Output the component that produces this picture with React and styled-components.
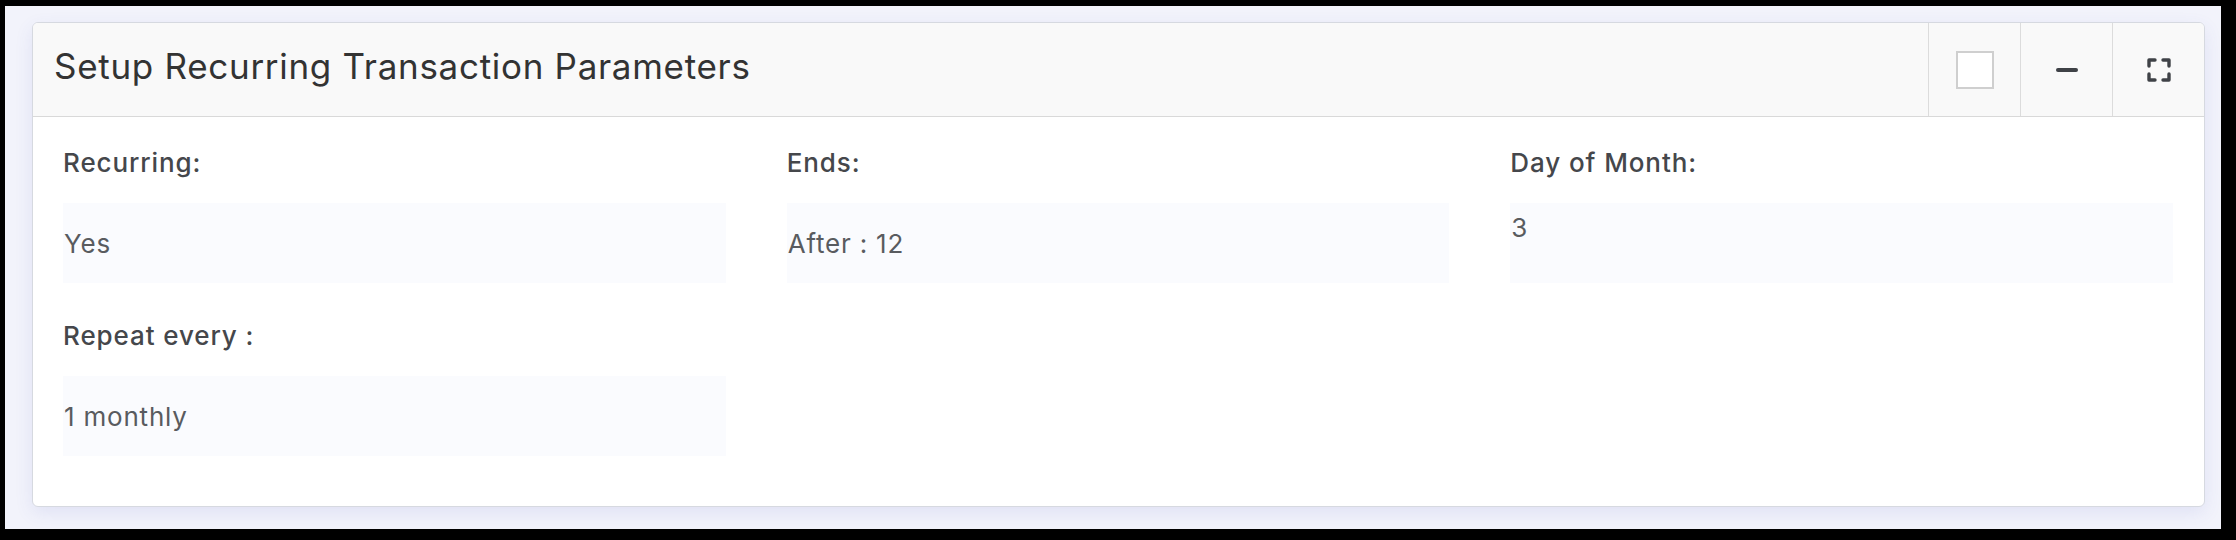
import React from 'react';
import styled, { createGlobalStyle } from 'styled-components';

const GlobalStyle = createGlobalStyle`
    html, body {
        margin: 0;
        padding: 0;
        height: 100%;
        overflow: hidden;
        background: #000000;
        font-family: Inter, "Noto Sans", "Liberation Sans", sans-serif;
    }
`
const Frame = styled.div`
    margin: 6px 15px 9px 5px;
    padding: 16px 16px 22px 27px;
    background: #f2f3fb;
`
const Card = styled.section`
    background: #ffffff;
    border: 1px solid #d6d9e0;
    border-radius: 6px;
    box-shadow: 0 6px 18px rgba(70, 80, 190, 0.1);
    overflow: hidden;
`
const Header = styled.header`
    display: flex;
    align-items: stretch;
    height: 93px;
    background: #f9f9f9;
    border-bottom: 1px solid #d9d9d9;
`
const Title = styled.h2`
    flex: 1;
    display: flex;
    align-items: center;
    margin: 0;
    padding: 0 0 8px 21px;
    font-size: 35px;
    letter-spacing: 0.7px;
    font-weight: 400;
    color: #333333;
`
const ToolButton = styled.button`
    width: 92px;
    box-sizing: border-box;
    display: flex;
    align-items: center;
    justify-content: center;
    border: none;
    border-left: 1px solid #dcdcdc;
    background: transparent;
    padding: 0;
    cursor: pointer;
`
const CheckBox = styled.span`
    width: 38px;
    height: 38px;
    box-sizing: border-box;
    border: 2px solid #cfcfcf;
    background: #ffffff;
`
const Minus = styled.span`
    width: 22px;
    height: 4px;
    border-radius: 2px;
    background: #3f4247;
`
const Body = styled.div`
    display: grid;
    grid-template-columns: repeat(3, 1fr);
    column-gap: 61px;
    row-gap: 38px;
    padding: 31px 31px 50px 30px;
`
const Field = styled.div`
    display: flex;
    flex-direction: column;
`
const Label = styled.div`
    font-size: 26px;
    letter-spacing: 0.9px;
    line-height: 29px;
    font-weight: 500;
    color: #45474b;
    margin-bottom: 26px;
`
const Value = styled.div`
    height: 80px;
    box-sizing: border-box;
    padding: ${({ top }) => (top ? '10px' : '26px')} 0 0 1px;
    background: #fafbfe;
    font-size: 26px;
    letter-spacing: 0.8px;
    line-height: 29px;
    color: #595b5f;
`

function ExpandIcon() {
    return (
        <svg width="24" height="24" viewBox="0 0 24 24" fill="none" stroke="#3f4247" strokeWidth="3.4" strokeLinecap="round" strokeLinejoin="round">
            <path d="M2 8V2h6M16 2h6v6M22 16v6h-6M8 22H2v-6" />
        </svg>
    )
}

const fields = [
    { label: 'Recurring:', value: 'Yes' },
    { label: 'Ends:', value: 'After : 12' },
    { label: 'Day of Month:', value: '3', top: true },
    { label: 'Repeat every :', value: '1 monthly' },
]

function App() {
    return (
        <>
            <GlobalStyle />
            <Frame>
                <Card>
                    <Header>
                        <Title>Setup Recurring Transaction Parameters</Title>
                        <ToolButton aria-label="select"><CheckBox /></ToolButton>
                        <ToolButton aria-label="minimize"><Minus /></ToolButton>
                        <ToolButton aria-label="fullscreen"><ExpandIcon /></ToolButton>
                    </Header>
                    <Body>
                        {fields.map(f => (
                            <Field key={f.label}>
                                <Label>{f.label}</Label>
                                <Value top={f.top}>{f.value}</Value>
                            </Field>
                        ))}
                    </Body>
                </Card>
            </Frame>
        </>
    )
}

export default App;
